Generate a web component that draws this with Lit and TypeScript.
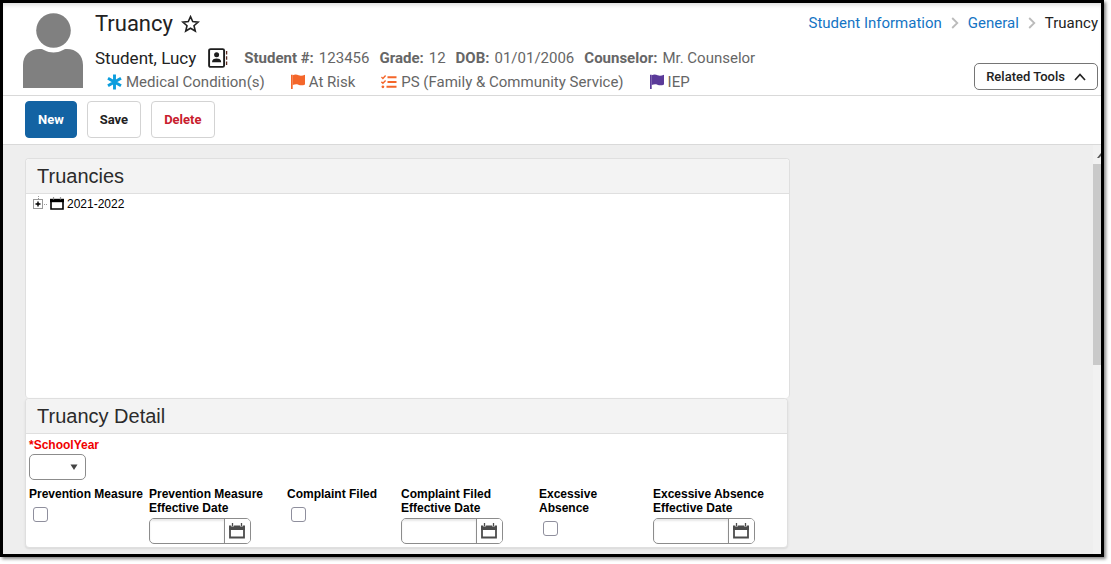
import { LitElement, html, css, svg } from "lit";
import { customElement, property } from "lit/decorators.js";

const flagIcon = svg`
  <path d="M0 .8H1.7V15H0Z" fill="currentColor"/>
  <path d="M1.7 1.3C4 .2 6 .6 7.6 1.3C9.6 2.1 11.6 1.8 14 .7V10.4C11.6 11.6 9.4 11.4 7.4 10.7C5.4 10 3.8 10.2 1.7 11.1Z" fill="currentColor"/>`;

@customElement("date-field")
export class DateField extends LitElement {
  @property() label = "";

  static styles = css`
    :host { display: block; }
    .label { display: block; font-weight: bold; }
    .group {
      display: flex;
      width: 102px;
      height: 26px;
      margin-top: 3px;
      box-sizing: border-box;
      border: 1px solid #8c8c8c;
      border-radius: 5px;
      background: #fff;
      overflow: hidden;
    }
    .input {
      flex: 1;
      min-width: 0;
      border: 0;
      padding: 0 4px;
      outline: none;
      background: transparent;
      box-shadow: inset 0 2px 2px #e8e8e8;
      font: 12px "Liberation Sans", Arial, sans-serif;
    }
    .pick {
      display: flex;
      align-items: center;
      width: 26px;
      padding: 0 0 0 4px;
      border: 0;
      border-left: 1px solid #8c8c8c;
      background: #fff;
      color: #4c4c4c;
    }
  `;

  render() {
    return html`
      <label class="label" for="date">${this.label}</label>
      <div class="group">
        <input class="input" id="date" type="text" />
        <button class="pick" aria-label="Open calendar">
          <svg width="16" height="16" viewBox="0 0 16 16">
            <path d="M1 5V14.500H15V5Z" fill="#fff" stroke="currentColor" stroke-width="1.800"/>
            <path d="M0 2.500H16V7H0Z" fill="currentColor"/>
            <path d="M3.500 0V3.600M12.500 0V3.600" stroke="#fff" stroke-width="2.600"/>
            <path d="M3.500 0V3.200M12.500 0V3.200" stroke="currentColor" stroke-width="1.300"/>
          </svg>
        </button>
      </div>
    `;
  }
}

@customElement("app-root")
export class AppRoot extends LitElement {
  static styles = css`
    :host {
      display: block;
      box-sizing: border-box;
      height: 100vh;
      padding: 0 7px 7px 0;
      background: #fff;
      font-family: Roboto, sans-serif;
      color: #222;
    }
    .frame {
      display: flex;
      flex-direction: column;
      box-sizing: border-box;
      height: 100%;
      border: 3px solid #000;
      background: #fff;
      box-shadow: 2px 2px 3px #888;
      overflow: hidden;
    }
    .header {
      display: flex;
      gap: 12px;
      padding: 7px 3px 3px 20px;
      border-bottom: 1px solid #d9d9d9;
      box-shadow: inset 0 4px 4px -2px #ddd;
    }
    .avatar { flex: none; align-self: flex-end; margin-bottom: 4px; display: block; }
    .info { flex: 1; min-width: 0; }
    .title-row { display: flex; align-items: center; gap: 8px; height: 28px; }
    .title { margin: 0; font-size: 22px; line-height: 28px; font-weight: 400; }
    .icon-button { display: flex; padding: 0; border: 0; background: none; color: #222; }
    .student-row {
      display: flex;
      align-items: center;
      height: 26px;
      margin-top: 7px;
      white-space: nowrap;
      font-size: 17px;
    }
    .student-row .icon-button { margin: 0 16px 0 12px; }
    .facts { display: flex; gap: 10px; margin: 0; font-size: 15px; color: #666; }
    .fact { display: flex; gap: 5px; }
    .fact-name { font-weight: 700; }
    .fact-value { margin: 0; }
    .flags {
      display: flex;
      gap: 26px;
      margin: 0;
      padding: 1px 0 0 12px;
      list-style: none;
      white-space: nowrap;
      font-size: 15px;
      line-height: 20px;
      color: #666;
    }
    .flag { display: flex; align-items: center; gap: 4px; }
    .medical { color: #0b9ddd; }
    .risk { color: #f4662a; }
    .iep { color: #5a3a99; }
    .side {
      display: flex;
      flex-direction: column;
      align-items: flex-end;
      justify-content: space-between;
      padding-bottom: 2px;
    }
    .crumbs { display: flex; align-items: center; gap: 9px; height: 26px; font-size: 15px; }
    .crumb { color: #1474c4; text-decoration: none; }
    .chevron { color: #bbb; }
    .related {
      display: flex;
      align-items: center;
      gap: 9px;
      height: 27px;
      padding: 0 11px;
      border: 1px solid #757575;
      border-radius: 5px;
      background: #fff;
      font: 500 13px Roboto, sans-serif;
      color: #222;
    }
    .toolbar {
      display: flex;
      gap: 10px;
      padding: 5px 22px 6px;
      border-bottom: 1px solid #d9d9d9;
    }
    .button {
      height: 37px;
      padding: 0 12px;
      border: 1px solid #d3d3d3;
      border-radius: 4px;
      background: #fff;
      font: bold 13px Roboto, sans-serif;
      color: #222;
    }
    .primary { border-color: #1363a3; background: #1363a3; color: #fff; }
    .danger { color: #c8202d; }
    .main { flex: 1; display: flex; min-height: 0; background: #eee; }
    .content {
      flex: 1;
      min-width: 0;
      padding: 13px 22px 0;
      overflow: hidden;
      font: 12px/14px "Liberation Sans", Arial, sans-serif;
      color: #000;
    }
    .card {
      box-sizing: border-box;
      max-width: 765px;
      border: 1px solid #dfdfdf;
      border-radius: 4px;
      background: #fff;
    }
    .list-card { min-height: 240px; border-bottom: 0; }
    .detail-card { max-width: 763px; box-shadow: 0 1px 2px #d8d8d8; }
    .card-title {
      margin: 0;
      padding: 5px 11px;
      border-bottom: 1px solid #dfdfdf;
      border-radius: 4px 4px 0 0;
      background: #f3f3f3;
      font-size: 20px;
      line-height: 24px;
      font-weight: 400;
      color: #2b2b2b;
    }
    .tree { margin: 0; padding: 0 7px; list-style: none; }
    .tree-item { display: flex; align-items: center; gap: 3px; height: 19px; }
    .expand { display: flex; padding: 0; border: 0; background: none; }
    .form { padding: 4px 3px 3px; }
    .label { display: block; font-weight: bold; }
    .required { color: #f00000; }
    .year {
      appearance: none;
      display: block;
      width: 57px;
      height: 26px;
      margin: 2px 0 7px;
      border: 1px solid #8c8c8c;
      border-radius: 5px;
      background: #fff
        url("data:image/svg+xml,%3Csvg xmlns='http://www.w3.org/2000/svg' width='8' height='6'%3E%3Cpath d='M0.5 0.5H7.5L4 6Z' fill='%23444'/%3E%3C/svg%3E")
        no-repeat right 7px center;
    }
    .fields {
      display: grid;
      grid-template-columns: 120px 138px 114px 138px 114px 1fr;
      align-items: start;
    }
    .narrow { max-width: 70px; }
    .date { max-width: 120px; }
    .check {
      appearance: none;
      display: block;
      width: 15px;
      height: 15px;
      margin: 6px 0 0 4px;
      border: 1px solid #8f8f9d;
      border-radius: 3px;
      background: #fff;
    }
    .scroll { flex: none; width: 8px; padding-top: 8px; background: #f1f1f1; }
    .scroll-arrow { display: block; margin-left: 4px; }
    .thumb { height: 50%; margin-top: 6px; background: #c9c9c9; }
  `;

  private checkField(id: string, label: string, narrow = false) {
    return html`<div>
      <label class="label ${narrow ? "narrow" : ""}" for=${id}>${label}</label>
      <input class="check" id=${id} type="checkbox" />
    </div>`;
  }

  private fact(name: string, value: string) {
    return html`<div class="fact"><dt class="fact-name">${name}</dt><dd class="fact-value">${value}</dd></div>`;
  }

  private chevron() {
    return html`<svg class="chevron" width="8" height="12" viewBox="0 0 8 12"><path d="M1.2 1L6.3 6L1.2 11" fill="none" stroke="currentColor" stroke-width="1.8"/></svg>`;
  }

  render() {
    return html`
      <div class="frame">
        <header class="header">
          <svg class="avatar" width="60" height="75" viewBox="0 0 60 75" fill="#808080">
            <circle cx="30.5" cy="17.5" r="17.3"/>
            <path d="M0 75V52C0 42 7 36 17 36C19 36 20 36.500 21.500 37.300C27 40.300 34 40.300 39.500 37.300C41 36.500 42 36 44 36C53 36 60 42 60 52V75Z"/>
          </svg>
          <div class="info">
            <div class="title-row">
              <h1 class="title">Truancy</h1>
              <button class="icon-button" aria-label="Add to favorites">
                <svg width="19" height="18" viewBox="0 0 19 18"><path d="M9.500 1.700L11.700 6.600L17.200 7.100L13 10.700L14.300 16L9.500 13.200L4.700 16L6 10.700L1.800 7.100L7.300 6.600Z" fill="none" stroke="currentColor" stroke-width="1.600"/></svg>
              </button>
            </div>
            <div class="student-row">
              <span>Student, Lucy</span>
              <button class="icon-button" aria-label="Contact card">
                <svg width="20" height="20" viewBox="0 0 20 20">
                  <rect x="1.100" y="1.100" width="15" height="17.800" rx="1.500" fill="none" stroke="#1d1d1d" stroke-width="1.900"/>
                  <circle cx="8.600" cy="6.700" r="2.500" fill="#1d1d1d"/>
                  <path d="M4 14.200C4 11.500 6 10.500 8.600 10.500S13.200 11.500 13.200 14.200Z" fill="#1d1d1d"/>
                  <path d="M18.600 3V6.500M18.600 8.200V11.700M18.600 13.400V16.900" stroke="#5a2a20" stroke-width="1.300"/>
                </svg>
              </button>
              <dl class="facts">
                ${this.fact("Student #:", "123456")}
                ${this.fact("Grade:", "12")}
                ${this.fact("DOB:", "01/01/2006")}
                ${this.fact("Counselor:", "Mr. Counselor")}
              </dl>
            </div>
            <ul class="flags">
              <li class="flag">
                <svg class="medical" width="15" height="16" viewBox="0 0 15 16"><path d="M7.500 .5V15.500M1 4.200L14 11.800M14 4.200L1 11.800" stroke="currentColor" stroke-width="2.900"/></svg>
                Medical Condition(s)
              </li>
              <li class="flag">
                <svg class="risk" width="14" height="16" viewBox="0 0 14 16">${flagIcon}</svg>
                At Risk
              </li>
              <li class="flag">
                <svg class="risk" width="16" height="14" viewBox="0 0 16 14" fill="none" stroke="currentColor">
                  <path d="M6.500 2.300H15.500M6.500 7H15.500M5.500 11.800H15.500" stroke-width="1.900"/>
                  <path d="M.4 2L1.900 3.400L4.600 .6M.4 6.800L1.900 8.200L4.600 5.400" stroke-width="1.400"/>
                  <circle cx="1.900" cy="11.800" r="1.400" fill="currentColor" stroke="none"/>
                </svg>
                PS (Family &amp; Community Service)
              </li>
              <li class="flag">
                <svg class="iep" width="14" height="16" viewBox="0 0 14 16">${flagIcon}</svg>
                IEP
              </li>
            </ul>
          </div>
          <div class="side">
            <nav class="crumbs" aria-label="Breadcrumb">
              <a class="crumb" href="#student-information">Student Information</a>
              ${this.chevron()}
              <a class="crumb" href="#general">General</a>
              ${this.chevron()}
              <span>Truancy</span>
            </nav>
            <button class="related">
              Related Tools
              <svg width="12" height="8" viewBox="0 0 12 8"><path d="M1 7L6 1.500L11 7" fill="none" stroke="currentColor" stroke-width="1.700"/></svg>
            </button>
          </div>
        </header>
        <div class="toolbar">
          <button class="button primary">New</button>
          <button class="button">Save</button>
          <button class="button danger">Delete</button>
        </div>
        <main class="main">
          <div class="content">
            <section class="card list-card">
              <h2 class="card-title">Truancies</h2>
              <ul class="tree">
                <li class="tree-item">
                  <button class="expand" aria-label="Expand 2021-2022">
                    <svg width="14" height="18" viewBox="0 0 14 18">
                      <path d="M5.500 1V4M11 9.500H14" stroke="#999" stroke-dasharray="1 1"/>
                      <rect x="0.500" y="4.500" width="9" height="9" fill="#fff" stroke="#999"/>
                      <path d="M2.500 9H7.500M5 6.500V11.500" stroke="#000" stroke-width="1.400"/>
                    </svg>
                  </button>
                  <svg width="14" height="13" viewBox="0 0 14 13">
                    <path d="M1 4V12H13V4Z" fill="#fff" stroke="#000" stroke-width="1.600"/>
                    <path d="M0 1.800H14V5.200H0Z" fill="#000"/>
                    <path d="M3.500 0V2.400M10.500 0V2.400" stroke="#999" stroke-width="1.200"/>
                  </svg>
                  <span>2021-2022</span>
                </li>
              </ul>
            </section>
            <section class="card detail-card">
              <h2 class="card-title">Truancy Detail</h2>
              <form class="form">
                <label class="label required" for="year">*SchoolYear</label>
                <select class="year" id="year"><option></option></select>
                <div class="fields">
                  ${this.checkField("prevention", "Prevention Measure")}
                  <date-field class="date" label="Prevention Measure Effective Date"></date-field>
                  ${this.checkField("complaint", "Complaint Filed")}
                  <date-field class="date" label="Complaint Filed Effective Date"></date-field>
                  ${this.checkField("absence", "Excessive Absence", true)}
                  <date-field class="date" label="Excessive Absence Effective Date"></date-field>
                </div>
              </form>
            </section>
          </div>
          <div class="scroll">
            <svg class="scroll-arrow" width="4" height="5" viewBox="0 0 4 5"><path d="M0 5L4 0V3L2 5Z" fill="#555"/></svg>
            <div class="thumb"></div>
          </div>
        </main>
      </div>
    `;
  }
}
